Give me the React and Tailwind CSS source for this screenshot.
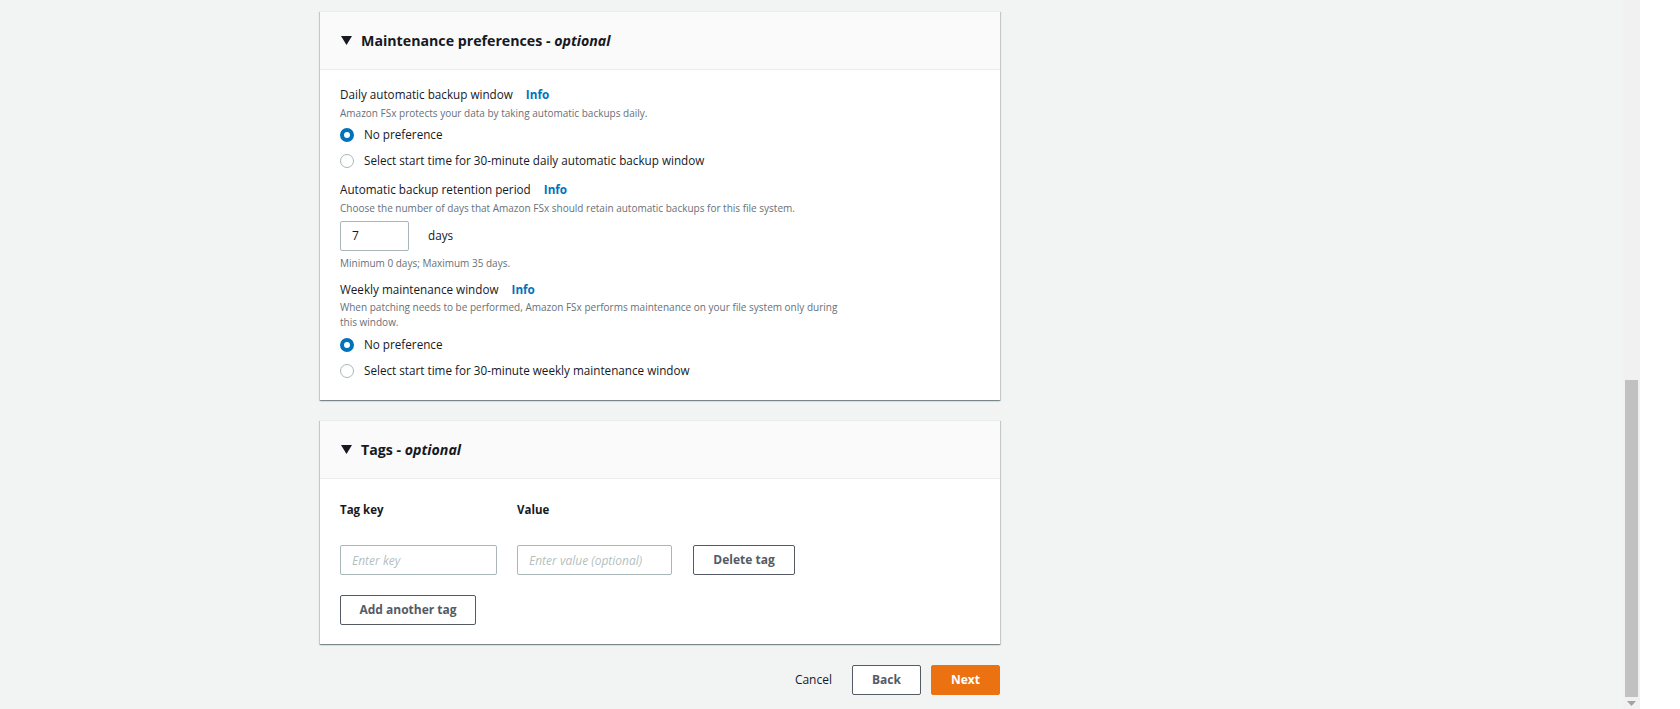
import React from "react";

function Caret() {
  return (
    <svg width="11" height="9" viewBox="0 0 11 9" className="shrink-0">
      <polygon points="0,0 11,0 5.5,9" fill="#16191f" />
    </svg>
  );
}

function Radio({ checked, label }) {
  return (
    <label className="flex h-[26px] items-center gap-[10px]">
      <span
        className={
          checked
            ? "h-[14px] w-[14px] rounded-full border-[4px] border-[#0073bb] bg-white"
            : "h-[14px] w-[14px] rounded-full border border-[#aab7b8] bg-white"
        }
      />
      <span className="text-[11.7px] text-[#16191f]">{label}</span>
    </label>
  );
}

function FieldLabel({ children }) {
  return (
    <div className="flex h-5 items-center gap-[13px] text-[11.7px] text-[#16191f]">
      <span>{children}</span>
      <a className="font-bold text-[#0073bb]">Info</a>
    </div>
  );
}

function Desc({ children, className = "" }) {
  return <p className={`text-[10px] leading-[16px] text-[#687078] ${className}`}>{children}</p>;
}

function Card({ title, children }) {
  return (
    <section className="w-[680px] border-t border-[#eaeded] bg-white shadow-[0_1px_1px_0_rgba(0,28,36,0.3),1px_1px_1px_0_rgba(0,28,36,0.15),-1px_1px_1px_0_rgba(0,28,36,0.15)]">
      <header className="flex h-[58px] items-center gap-[9px] border-b border-[#eaeded] bg-[#fafafa] px-[21px]">
        <Caret />
        <h2 className="text-[14.2px] font-bold text-[#16191f]">
          {title} - <em className="italic">optional</em>
        </h2>
      </header>
      {children}
    </section>
  );
}

const btn =
  "flex h-[30px] items-center justify-center rounded-[2px] border border-[#545b64] bg-white text-[12px] font-bold text-[#545b64]";
const input =
  "h-[30px] rounded-[2px] border border-[#aab7b8] bg-white px-[11px] text-[12px] italic text-[#aab7b8] outline-none placeholder:text-[#b4bfc0]";

export default function App() {
  return (
    <div className="flex h-[709px] w-[1680px] overflow-hidden font-['Open_Sans',sans-serif]">
      <main className="flex-1 bg-[#f2f3f3] pl-[320px] pt-[11px]">
        <Card title="Maintenance preferences">
          <div className="flex flex-col px-5 pb-4 pt-[15px]">
            <FieldLabel>Daily automatic backup window</FieldLabel>
            <Desc>Amazon FSx protects your data by taking automatic backups daily.</Desc>
            <div className="mt-px">
              <Radio checked label="No preference" />
              <Radio label="Select start time for 30-minute daily automatic backup window" />
            </div>

            <div className="mt-[6px]">
              <FieldLabel>Automatic backup retention period</FieldLabel>
            </div>
            <Desc>Choose the number of days that Amazon FSx should retain automatic backups for this file system.</Desc>
            <div className="mt-[5px] flex items-center gap-[19px]">
              <div className="flex h-[30px] w-[69px] items-center rounded-[2px] border border-[#aab7b8] px-[11px] text-[12px] text-[#16191f]">
                7
              </div>
              <span className="text-[11.7px] text-[#16191f]">days</span>
            </div>
            <Desc className="mt-1">Minimum 0 days; Maximum 35 days.</Desc>

            <div className="mt-[9px]">
              <FieldLabel>Weekly maintenance window</FieldLabel>
            </div>
            <p className="max-w-[510px] text-[10px] leading-[15px] text-[#687078]">
              When patching needs to be performed, Amazon FSx performs maintenance on your file system only during
              <br />
              this window.
            </p>
            <div className="mt-[2px]">
              <Radio checked label="No preference" />
              <Radio label="Select start time for 30-minute weekly maintenance window" />
            </div>
          </div>
        </Card>

        <div className="mt-5">
          <Card title="Tags">
            <div className="flex flex-col px-5 pb-[19px] pt-[21px]">
              <div className="grid grid-cols-[157px_155px_102px] gap-x-5 gap-y-[25px]">
                <span className="flex h-5 items-center text-[11.5px] font-bold text-[#16191f]">Tag key</span>
                <span className="flex h-5 items-center text-[11.5px] font-bold text-[#16191f]">Value</span>
                <span />
                <input className={input} placeholder="Enter key" />
                <input className={input} placeholder="Enter value (optional)" />
                <button className={`${btn} ml-px w-[102px]`}>Delete tag</button>
              </div>
              <button className={`${btn} mt-5 w-[136px]`}>Add another tag</button>
            </div>
          </Card>
        </div>

        <div className="mt-[21px] flex w-[680px] items-center justify-end">
          <button className="mr-5 text-[12px] font-medium text-[#16191f]">Cancel</button>
          <button className={`${btn} w-[69px]`}>Back</button>
          <button className="ml-[10px] flex h-[30px] w-[69px] items-center justify-center rounded-[2px] border border-[#ec7211] bg-[#ec7211] text-[12px] font-bold text-white">
            Next
          </button>
        </div>
      </main>

      <div className="flex w-[17px] flex-col items-center bg-[#f1f1f1] pt-[380px]">
        <div className="h-[317px] w-[13px] bg-[#c1c1c1]" />
        <svg width="9" height="5" viewBox="0 0 9 5" className="mt-[4px]">
          <polygon points="0,0 9,0 4.5,5" fill="#a3a3a3" />
        </svg>
      </div>
      <div className="w-[40px] bg-white" />
    </div>
  );
}
